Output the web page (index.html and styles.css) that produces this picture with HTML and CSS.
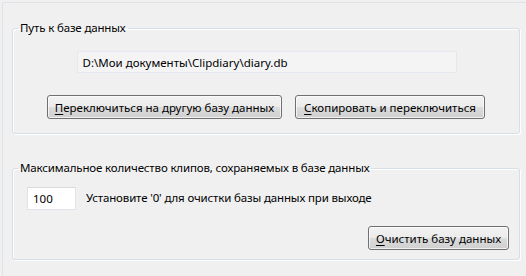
FILE: index.html
```html
<!DOCTYPE html>
<html lang="ru">
<head>
  <meta charset="UTF-8">
  <title>Настройки базы данных</title>
  <link rel="stylesheet" href="styles.css">
</head>
<body>
  <div class="frame">
    <fieldset class="group group-path">
      <legend>Путь к базе данных</legend>
      <div class="path-row">
        <input type="text" class="path-input" value="D:\Мои документы\Clipdiary\diary.db" readonly>
      </div>
      <div class="btn-row">
        <button class="btn btn-switch"><u>П</u>ереключиться на другую базу данных</button>
        <button class="btn btn-copy"><u>С</u>копировать и переключиться</button>
      </div>
    </fieldset>

    <fieldset class="group group-max">
      <legend>Максимальное количество клипов, сохраняемых в базе данных</legend>
      <div class="max-row">
        <input type="text" class="num-input" value="100">
        <span class="hint">Установите '0' для очистки базы данных при выходе</span>
      </div>
      <div class="clear-row">
        <button class="btn btn-clear"><u>О</u>чистить базу данных</button>
      </div>
    </fieldset>
  </div>
</body>
</html>
```

FILE: styles.css
```css
:root {
  --bg: #f0f0f0;
  --frame-line: #dfe3e8;
  --group-line: #d5dfe5;
  --text: #000;
}

body {
  margin: 0;
  background: var(--bg);
  font-family: 'Noto Sans', sans-serif;
  font-size: 11.5px;
  letter-spacing: -0.15px;
  color: var(--text);
  overflow: hidden;
}

.frame {
  box-sizing: border-box;
  height: 274px;
  margin: 2px 0 0 2px;
  border-top: 1px solid var(--frame-line);
  border-left: 1px solid var(--frame-line);
  padding: 17px 0 0 9px;
}

.group {
  width: 506px;
  margin: 0;
  padding: 0;
  border: 1px solid var(--group-line);
  border-radius: 3px;
  box-shadow: inset 1px 1px 0 #fff, 1px 1px 0 #fff;
}

.group legend {
  margin-left: 5px;
  padding: 0 2px;
  line-height: 16px;
}

.group-path {
  padding-bottom: 14px;
}

.group-max {
  margin-top: 26px;
  padding-bottom: 9px;
}

.path-row {
  display: flex;
  justify-content: center;
  margin-top: 15px;
}

.path-input {
  width: 380px;
  height: 22px;
  box-sizing: border-box;
  margin: 0 0 0 1px;
  padding: 0 5px;
  font: inherit;
  background: #f4f4f4;
  border: 1px solid #e3e9ef;
  color: var(--text);
  outline: none;
}

.btn-row {
  display: flex;
  justify-content: center;
  gap: 13px;
  margin-top: 22px;
}

.btn {
  height: 24px;
  padding: 0;
  font: inherit;
  color: var(--text);
  border: 1px solid #707070;
  border-radius: 3px;
  background: linear-gradient(#f2f2f2 0%, #ebebeb 50%, #dddddd 50%, #cfcfcf 100%);
  box-shadow: inset 0 0 0 1px rgba(255, 255, 255, 0.7);
}

.btn u {
  text-decoration-thickness: 1px;
  text-underline-offset: 2px;
}

.btn-switch {
  width: 235px;
}

.btn-copy {
  width: 190px;
}

.btn-clear {
  width: 141px;
}

.max-row {
  display: flex;
  align-items: center;
  margin: 11px 0 0 14px;
}

.num-input {
  width: 49px;
  height: 23px;
  box-sizing: border-box;
  margin: 0;
  padding: 0 5px;
  font: inherit;
  background: #fff;
  border: 1px solid #e2e3ea;
  border-top-color: #d6d9de;
  outline: none;
}

.hint {
  margin-left: 10px;
  margin-top: -2px;
}

.clear-row {
  display: flex;
  justify-content: flex-end;
  margin: 16px 10px 0 0;
}
```
